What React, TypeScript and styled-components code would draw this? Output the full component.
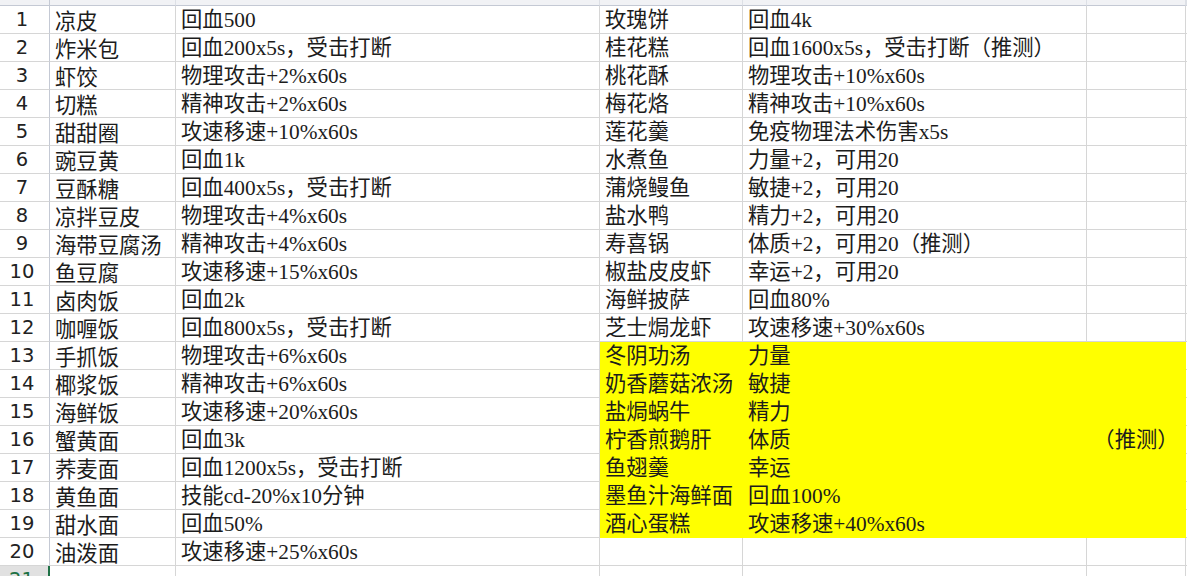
import React from "react";
import styled, { createGlobalStyle } from "styled-components";

const GlobalStyle = createGlobalStyle`
  html, body {
    margin: 0;
    padding: 0;
    background: #ffffff;
    overflow: hidden;
  }
  #root {
    width: 1187px;
    height: 576px;
    overflow: hidden;
  }
`;

const GRID = "#d6d6d6";
const HEADER_EDGE = "#c4c9d4";
const YELLOW = "#ffff00";

const Sheet = styled.div`
  display: grid;
  grid-template-columns: 50px 126px 424px 143px 344px 99px 1fr;
  grid-auto-rows: 28px;
  grid-template-rows: 6px;
  width: 1187px;
  color: #1c1c1c;
`;

const ColHeader = styled.div<{ $corner?: boolean }>`
  height: 6px;
  box-sizing: border-box;
  background: #f1f2f5;
  border-bottom: 1px solid ${HEADER_EDGE};
  border-right: 1px solid ${(p) => (p.$corner ? HEADER_EDGE : "#dde0e6")};
`;

const RowHeader = styled.div<{ $selected?: boolean }>`
  box-sizing: border-box;
  height: 28px;
  padding-right: 5px;
  display: flex;
  align-items: center;
  justify-content: center;
  font-family: "DejaVu Sans", "Noto Sans", sans-serif;
  font-size: 19.5px;
  line-height: 27px;
  color: ${(p) => (p.$selected ? "#1e7145" : "#222222")};
  background: ${(p) => (p.$selected ? "#e1e1e1" : "#ffffff")};
  border-bottom: 1px solid ${GRID};
  border-right: ${(p) => (p.$selected ? "2px solid #1e7145" : `1px solid ${HEADER_EDGE}`)};
`;

const Cell = styled.div<{ $sans?: boolean; $fill?: boolean; $center?: boolean }>`
  box-sizing: border-box;
  height: 28px;
  padding: 1px 5px 0;
  white-space: nowrap;
  overflow: visible;
  font-family: ${(p) =>
    p.$sans
      ? `"Noto Sans CJK SC", "Noto Sans", sans-serif`
      : `"Liberation Serif", "Noto Sans CJK SC", serif`};
  font-size: 21.33px;
  line-height: 26px;
  text-align: ${(p) => (p.$center ? "center" : "left")};
  background: ${(p) => (p.$fill ? YELLOW : "transparent")};
  border-bottom: 1px solid ${(p) => (p.$fill ? YELLOW : GRID)};
  border-right: 1px solid ${(p) => (p.$fill ? YELLOW : GRID)};
`;

const Spacer = styled.div`
  box-sizing: border-box;
  height: 28px;
  border-bottom: 1px solid ${GRID};
`;

type Row = { a: string; b: string; c: string; d: string; e?: string; fill?: boolean };

const rows: Row[] = [
  { a: "凉皮", b: "回血500", c: "玫瑰饼", d: "回血4k" },
  { a: "炸米包", b: "回血200x5s，受击打断", c: "桂花糕", d: "回血1600x5s，受击打断（推测）" },
  { a: "虾饺", b: "物理攻击+2%x60s", c: "桃花酥", d: "物理攻击+10%x60s" },
  { a: "切糕", b: "精神攻击+2%x60s", c: "梅花烙", d: "精神攻击+10%x60s" },
  { a: "甜甜圈", b: "攻速移速+10%x60s", c: "莲花羹", d: "免疫物理法术伤害x5s" },
  { a: "豌豆黄", b: "回血1k", c: "水煮鱼", d: "力量+2，可用20" },
  { a: "豆酥糖", b: "回血400x5s，受击打断", c: "蒲烧鳗鱼", d: "敏捷+2，可用20" },
  { a: "凉拌豆皮", b: "物理攻击+4%x60s", c: "盐水鸭", d: "精力+2，可用20" },
  { a: "海带豆腐汤", b: "精神攻击+4%x60s", c: "寿喜锅", d: "体质+2，可用20（推测）" },
  { a: "鱼豆腐", b: "攻速移速+15%x60s", c: "椒盐皮皮虾", d: "幸运+2，可用20" },
  { a: "卤肉饭", b: "回血2k", c: "海鲜披萨", d: "回血80%" },
  { a: "咖喱饭", b: "回血800x5s，受击打断", c: "芝士焗龙虾", d: "攻速移速+30%x60s" },
  { a: "手抓饭", b: "物理攻击+6%x60s", c: "冬阴功汤", d: "力量", fill: true },
  { a: "椰浆饭", b: "精神攻击+6%x60s", c: "奶香蘑菇浓汤", d: "敏捷", fill: true },
  { a: "海鲜饭", b: "攻速移速+20%x60s", c: "盐焗蜗牛", d: "精力", fill: true },
  { a: "蟹黄面", b: "回血3k", c: "柠香煎鹅肝", d: "体质", e: "（推测）", fill: true },
  { a: "荞麦面", b: "回血1200x5s，受击打断", c: "鱼翅羹", d: "幸运", fill: true },
  { a: "黄鱼面", b: "技能cd-20%x10分钟", c: "墨鱼汁海鲜面", d: "回血100%", fill: true },
  { a: "甜水面", b: "回血50%", c: "酒心蛋糕", d: "攻速移速+40%x60s", fill: true },
  { a: "油泼面", b: "攻速移速+25%x60s", c: "", d: "" },
];

export default function App() {
  return (
    <>
      <GlobalStyle />
      <Sheet>
        <ColHeader $corner />
        <ColHeader />
        <ColHeader />
        <ColHeader />
        <ColHeader />
        <ColHeader />
        <ColHeader />
        {rows.map((r, i) => (
          <React.Fragment key={i}>
            <RowHeader>{i + 1}</RowHeader>
            <Cell $sans>{r.a}</Cell>
            <Cell>{r.b}</Cell>
            <Cell $fill={r.fill}>{r.c}</Cell>
            <Cell $fill={r.fill}>{r.d}</Cell>
            <Cell $fill={r.fill} $center>
              {r.e ?? ""}
            </Cell>
            <Spacer />
          </React.Fragment>
        ))}
        <RowHeader $selected>21</RowHeader>
        <Cell $sans />
        <Cell />
        <Cell />
        <Cell />
        <Cell />
        <Spacer />
      </Sheet>
    </>
  );
}
